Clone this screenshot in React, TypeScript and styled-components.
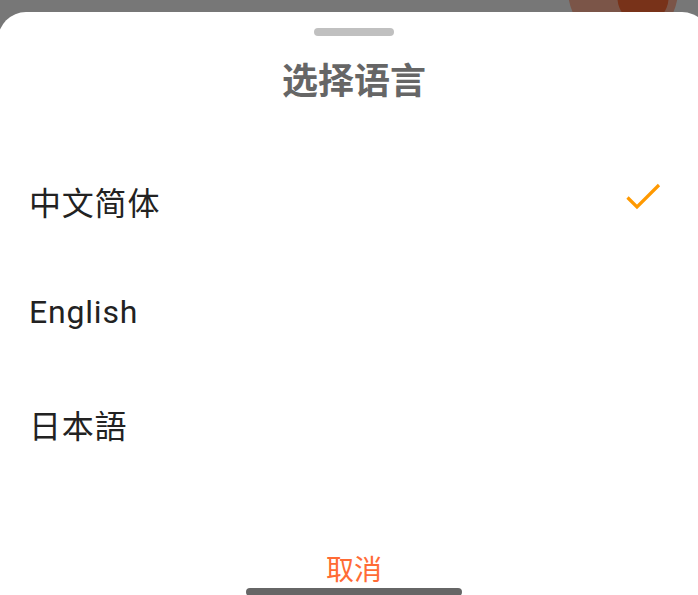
import React, { useState } from 'react'
import styled, { createGlobalStyle } from 'styled-components'

const GlobalStyle = createGlobalStyle`
  html, body {
    margin: 0;
    padding: 0;
    overflow: hidden;
    background: #777777;
  }
  * {
    box-sizing: border-box;
  }
`

interface Language {
  code: string;
  label: string;
}

const languages: Language[] = [
  { code: 'zh', label: '中文简体' },
  { code: 'en', label: 'English' },
  { code: 'ja', label: '日本語' },
]

const LanguageSheet: React.FC = () => {
  const [selected, setSelected] = useState<string>('zh')

  return (
    <Page>
      <Backdrop width="140" height="12" viewBox="0 0 140 12">
        <circle cx="63" cy="-10" r="55" fill="#7b5548" />
        <circle cx="83" cy="-2" r="25.5" fill="#783219" />
      </Backdrop>
      <Sheet>
        <Handle />
        <Title>选择语言</Title>
        <List>
          {languages.map((lang) => (
            <Row key={lang.code} onClick={() => setSelected(lang.code)}>
              <Label>{lang.label}</Label>
              {selected === lang.code && (
                <CheckIcon width="36" height="36" viewBox="0 0 36 36">
                  <path d="M1.5 14.5 L11 24 L33 2" fill="none" stroke="#ff9900" strokeWidth="3.2" />
                </CheckIcon>
              )}
            </Row>
          ))}
        </List>
        <Spacer />
        <CancelButton>取消</CancelButton>
        <HomeBar />
      </Sheet>
    </Page>
  )
}

const Page = styled.div`
  position: relative;
  width: 698px;
  height: 595px;
  padding-top: 12px;
  overflow: hidden;
  background: #777777;
`
const Backdrop = styled.svg`
  position: absolute;
  top: 0;
  left: 560px;
  display: block;
`
const Sheet = styled.div`
  position: relative;
  display: flex;
  flex-direction: column;
  align-items: stretch;
  width: 712px;
  height: 583px;
  margin-left: -2px;
  background: #ffffff;
  border-radius: 28px 28px 0 0;
`
const Handle = styled.div`
  width: 80px;
  height: 8px;
  margin: 16px auto 0;
  border-radius: 4px;
  background: #c0c0c0;
`
const Title = styled.h1`
  margin: 24px 0 0;
  font-family: "Noto Sans CJK SC", "Noto Sans", sans-serif;
  font-size: 36px;
  font-weight: 700;
  line-height: 36px;
  color: #666666;
  text-align: center;
`
const List = styled.div`
  display: flex;
  flex-direction: column;
  margin-top: 49px;
`
const Row = styled.div`
  display: flex;
  align-items: center;
  justify-content: space-between;
  height: 111.5px;
  padding: 0 48px 0 31px;
  cursor: pointer;
`
const Label = styled.span`
  font-family: Roboto, "Noto Sans CJK SC", sans-serif;
  font-size: 32px;
  letter-spacing: 0.8px;
  color: #222222;
`
const CheckIcon = styled.svg`
  display: block;
  flex-shrink: 0;
`
const Spacer = styled.div`
  flex: 1;
`
const CancelButton = styled.button`
  align-self: center;
  margin: 0 0 6px;
  padding: 0;
  border: none;
  background: none;
  font-family: "Noto Sans CJK SC", sans-serif;
  font-size: 28px;
  line-height: 28px;
  color: #ff6b35;
  cursor: pointer;
`
const HomeBar = styled.div`
  align-self: center;
  width: 216px;
  height: 8px;
  margin: 0 0 -1px;
  border-radius: 4px;
  background: #666666;
`

export default function App() {
  return (
    <>
      <GlobalStyle />
      <LanguageSheet />
    </>
  )
}
